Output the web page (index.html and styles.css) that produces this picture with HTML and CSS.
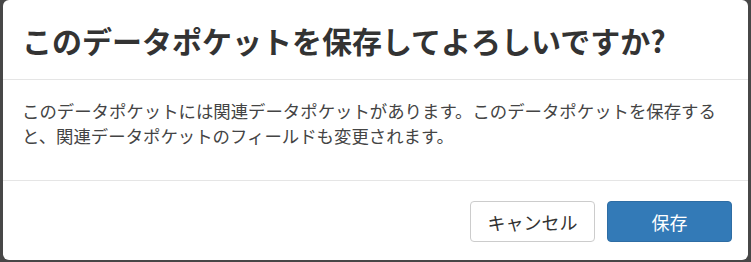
FILE: index.html
```html
<!DOCTYPE html>
<html lang="ja">
<head>
<meta charset="utf-8">
<link rel="stylesheet" href="styles.css">
</head>
<body>
<div class="modal">
  <div class="modal-header">
    <h4 class="modal-title">このデータポケットを保存してよろしいですか?</h4>
  </div>
  <div class="modal-body">
    <p>このデータポケットには関連データポケットがあります。このデータポケットを保存すると、関連データポケットのフィールドも変更されます。</p>
  </div>
  <div class="modal-footer">
    <button class="btn btn-default">キャンセル</button>
    <button class="btn btn-primary">保存</button>
  </div>
</div>
</body>
</html>
```
FILE: styles.css
```css
html, body {
  margin: 0;
  padding: 0;
  height: 100%;
}
body {
  background: #474747;
  font-family: "Noto Sans CJK JP", "Noto Sans", sans-serif;
  color: #333;
  overflow: hidden;
}
.modal {
  margin-left: 3px;
  width: 745px;
  height: 260px;
  background: #fff;
  border-radius: 6px;
  display: flex;
  flex-direction: column;
  box-sizing: border-box;
}
.modal-header {
  height: 80px;
  box-sizing: border-box;
  padding: 15px 19px;
  border-bottom: 1px solid #e5e5e5;
  display: flex;
  align-items: center;
}
.modal-title {
  margin: 0;
  font-size: 30px;
  line-height: 40px;
  font-weight: bold;
  color: #333;
}
.modal-body {
  height: 101px;
  box-sizing: border-box;
  padding: 18px 19px 0 19px;
  border-bottom: 1px solid #e5e5e5;
}
.modal-body p {
  margin: 0;
  font-size: 17.4px;
  line-height: 25px;
  color: #444;
}
.modal-footer {
  flex: 1;
  display: flex;
  justify-content: flex-end;
  align-items: flex-start;
  gap: 12px;
  padding: 20px 16px 0 0;
}
.btn {
  width: 125px;
  height: 41px;
  border-radius: 4px;
  font-family: "Noto Sans CJK JP", "Noto Sans", sans-serif;
  font-size: 18px;
  padding: 0;
  cursor: pointer;
}
.btn-default {
  background: #fff;
  border: 1px solid #ccc;
  color: #333;
}
.btn-primary {
  background: #337ab7;
  border: 1px solid #2e6da4;
  color: #fff;
}
```
